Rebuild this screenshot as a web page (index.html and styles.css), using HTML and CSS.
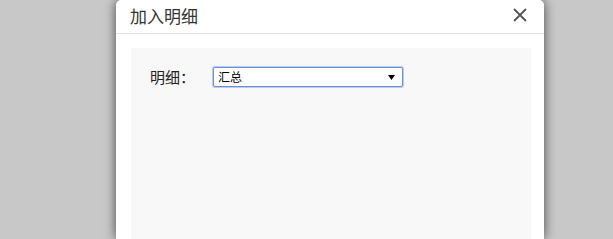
FILE: index.html
```html
<!DOCTYPE html>
<html lang="zh-CN">
<head>
  <meta charset="UTF-8">
  <title>加入明细</title>
  <link rel="stylesheet" href="styles.css">
</head>
<body>

<div class="dialog">
  <div class="dialog-header">
    <span class="dialog-title">加入明细</span>
    <span class="dialog-close">
      <svg width="14" height="14" viewBox="0 0 14 14"><path d="M1 1 L13 13 M13 1 L1 13" stroke="#555" stroke-width="1.8" fill="none"/></svg>
    </span>
  </div>
  <div class="dialog-body">
    <div class="panel">
      <div class="form-row">
        <label class="form-label" for="detail">明细：</label>
        <div class="select-wrap">
          <select id="detail" class="form-select">
            <option>汇总</option>
            <option>明细</option>
          </select>
          <svg class="select-arrow" width="7" height="5" viewBox="0 0 7 5"><path d="M0 0 H7 L3.5 5 Z" fill="#000"/></svg>
        </div>
      </div>
    </div>
  </div>
</div>

</body>
</html>
```

FILE: styles.css
```css
html, body {
  margin: 0;
  height: 100%;
  overflow: hidden;
}

body {
  background-color: #c8c8c8;
  font-family: "Noto Sans CJK SC", "Noto Sans", sans-serif;
}

.dialog {
  margin-left: 116px;
  width: 428px;
  height: 239px;
  background-color: white;
  border-radius: 5px 5px 0 0;
  box-shadow: 0 0 12px rgba(0, 0, 0, 0.65);
}

.dialog-header {
  height: 33px;
  border-bottom: 1px solid #e5e5e5;
  display: flex;
  align-items: center;
  justify-content: space-between;
  padding: 0 17px 0 14px;
}

.dialog-title {
  font-size: 17px;
  color: #333;
  line-height: 1;
  margin-top: -2px;
}

.dialog-close {
  display: flex;
  margin-top: -3px;
}

.dialog-body {
  padding: 14px 13px 0 15px;
}

.panel {
  background-color: #f8f8f8;
  height: 172px;
  padding: 18px 19px 2px 19px;
}

.form-row {
  display: flex;
  align-items: center;
}

.form-label {
  width: 63px;
  font-size: 15px;
  color: #222;
}

.select-wrap {
  position: relative;
  width: 190px;
}

.form-select {
  appearance: none;
  -webkit-appearance: none;
  display: block;
  width: 100%;
  height: 20px;
  padding: 0 0 0 4px;
  font-family: "Noto Sans CJK SC", sans-serif;
  font-size: 12px;
  color: #000;
  background-color: white;
  border: 1px solid #6f8fd6;
  border-radius: 2px;
  box-shadow: 0 0 0 1px #b9ccf0;
  outline: none;
}

.select-arrow {
  position: absolute;
  right: 8px;
  top: 8px;
  pointer-events: none;
}
```
